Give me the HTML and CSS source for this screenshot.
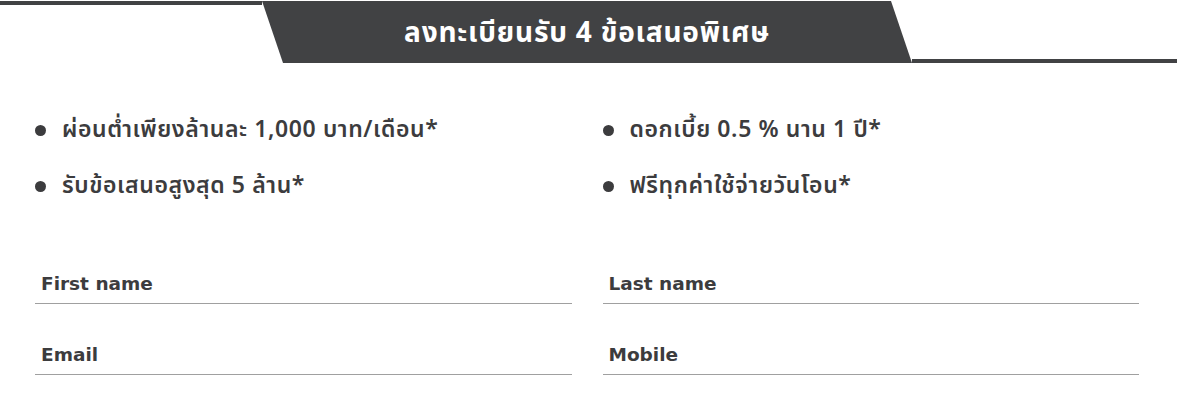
FILE: index.html
```html
<html>
<head>
<meta charset="utf-8" />
<title>ลงทะเบียนรับ 4 ข้อเสนอพิเศษ</title>
<link rel="stylesheet" href="styles.css">
</head>
<body>

<div class="banner">
    <div class="banner-line banner-line-left"></div>
    <div class="banner-title">ลงทะเบียนรับ 4 ข้อเสนอพิเศษ</div>
    <div class="banner-line banner-line-right"></div>
</div>

<div class="content">
    <ul class="offers">
        <li>ผ่อนต่ำเพียงล้านละ 1,000 บาท/เดือน*</li>
        <li>ดอกเบี้ย 0.5 % นาน 1 ปี*</li>
        <li>รับข้อเสนอสูงสุด 5 ล้าน*</li>
        <li>ฟรีทุกค่าใช้จ่ายวันโอน*</li>
    </ul>

    <div class="form">
        <div class="field"><span class="label">First name</span></div>
        <div class="field"><span class="label">Last name</span></div>
        <div class="field"><span class="label">Email</span></div>
        <div class="field"><span class="label">Mobile</span></div>
    </div>
</div>

</body>
</html>
```

FILE: styles.css
```css
body {
    background: #fff;
    margin: 0;
    color: #3c3c3e;
}

.banner {
    display: flex;
    height: 62px;
    margin-top: 1px;
}

.banner-line {
    height: 0;
}

.banner-line-left {
    flex: 0 0 262px;
    border-top: 4px solid #414244;
}

.banner-line-right {
    flex: 1;
    align-self: flex-end;
    border-bottom: 4px solid #414244;
}

.banner-title {
    flex: 0 0 650px;
    background: #414244;
    clip-path: polygon(0 0, 629px 0, 100% 100%, 21px 100%);
    display: flex;
    align-items: center;
    justify-content: center;
    color: #fff;
    font-family: "Noto Sans Thai", "Noto Sans", sans-serif;
    font-weight: 700;
    font-size: 28px;
    letter-spacing: 0.8px;
    padding-top: 2px;
}

.content {
    margin: 0 38px 0 35px;
}

.offers {
    list-style: none;
    margin: 39px 0 0;
    padding: 0;
    display: grid;
    grid-template-columns: 1fr 1fr;
    column-gap: 31px;
    font-family: "Noto Sans Thai", "Noto Sans", sans-serif;
    font-weight: 600;
    font-size: 23px;
    letter-spacing: 0.6px;
}

.offers li {
    display: flex;
    align-items: center;
    gap: 16px;
    height: 56px;
}

.offers li::before {
    content: "";
    flex: 0 0 11px;
    height: 11px;
    border-radius: 50%;
    background: #3c3c3e;
}

.form {
    display: grid;
    grid-template-columns: 1fr 1fr;
    column-gap: 31px;
    row-gap: 39px;
    margin-top: 58px;
}

.field {
    padding: 0 6px 7px;
    border-bottom: 1px solid #a0a0a0;
}

.label {
    display: block;
    line-height: 24px;
    font-family: "DejaVu Sans", sans-serif;
    font-weight: 700;
    font-size: 18.5px;
}
```
